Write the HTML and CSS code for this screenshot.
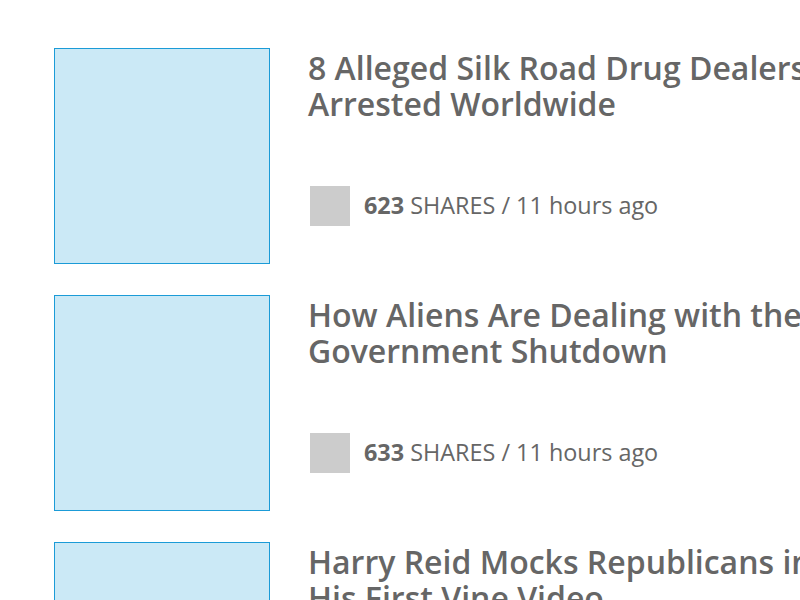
FILE: index.html
```html
<!DOCTYPE html>
<html>
<head>
<meta charset="utf-8">
<link rel="stylesheet" href="styles.css">
</head>
<body>
<div class="list">
  <div class="item">
    <div class="thumb"></div>
    <div class="body">
      <h2 class="title">8 Alleged Silk Road Drug Dealers Arrested Worldwide</h2>
      <div class="meta"><span class="avatar"></span><span class="stats"><b>623</b> SHARES / 11 hours ago</span></div>
    </div>
  </div>
  <div class="item">
    <div class="thumb"></div>
    <div class="body">
      <h2 class="title">How Aliens Are Dealing with the Government Shutdown</h2>
      <div class="meta"><span class="avatar"></span><span class="stats"><b>633</b> SHARES / 11 hours ago</span></div>
    </div>
  </div>
  <div class="item">
    <div class="thumb"></div>
    <div class="body">
      <h2 class="title">Harry Reid Mocks Republicans in His First Vine Video</h2>
      <div class="meta"><span class="avatar"></span><span class="stats"><b>641</b> SHARES / 11 hours ago</span></div>
    </div>
  </div>
</div>
</body>
</html>
```
FILE: styles.css
```css
html, body {
  margin: 0;
  padding: 0;
  background: #fff;
  overflow: hidden;
}
body {
  font-family: "Open Sans", "Liberation Sans", sans-serif;
  color: #666;
  width: 800px;
  height: 600px;
}
.list {
  padding: 48px 0 0 54px;
  display: flex;
  flex-direction: column;
  gap: 31px;
  width: 1000px;
}
.item {
  display: flex;
  gap: 38px;
}
.thumb {
  width: 214px;
  height: 214px;
  flex: none;
  background: #cbe9f6;
  border: 1px solid #1b9bd7;
}
.body {
  width: 530px;
}
.title {
  margin: 0;
  padding-top: 2px;
  font-size: 32px;
  line-height: 36px;
  font-weight: 600;
  color: #666;
}
.meta {
  display: flex;
  align-items: center;
  margin-top: 64px;
  margin-left: 2px;
}
.avatar {
  width: 40px;
  height: 40px;
  background: #cccccc;
  flex: none;
}
.stats {
  margin-left: 14px;
  padding-bottom: 3px;
  font-size: 23.4px;
  color: #666;
}
.stats b {
  font-weight: 700;
}
```
